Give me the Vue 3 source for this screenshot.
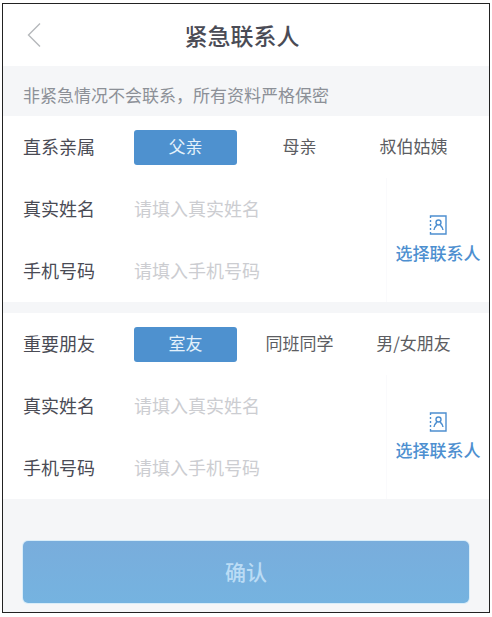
<script setup>
import { reactive } from 'vue';

const groups = reactive([
  {
    id: 'family',
    title: '直系亲属',
    options: ['父亲', '母亲', '叔伯姑姨'],
    selected: '父亲',
    name: '',
    phone: '',
  },
  {
    id: 'friend',
    title: '重要朋友',
    options: ['室友', '同班同学', '男/女朋友'],
    selected: '室友',
    name: '',
    phone: '',
  },
]);
</script>

<template>
  <main class="page">
    <header class="header">
      <button type="button" class="back_btn" aria-label="返回">
        <svg width="14" height="26" viewBox="0 0 14 26">
          <path d="M13 1.5 L1.5 13 L13 24.5" />
        </svg>
      </button>
      <h1>紧急联系人</h1>
    </header>
    <p class="notice">非紧急情况不会联系，所有资料严格保密</p>

    <form v-on:submit.prevent>
      <section v-for="group in groups" v-bind:key="group.id" class="group">
        <div class="row relation">
          <span class="label">{{ group.title }}</span>
          <div class="options">
            <button
              v-for="option in group.options"
              v-bind:key="option"
              type="button"
              v-bind:class="{ active: group.selected === option }"
              v-bind:aria-pressed="group.selected === option"
              v-on:click="group.selected = option"
            >
              {{ option }}
            </button>
          </div>
        </div>
        <div class="details">
          <div class="fields">
            <div class="row">
              <label class="label" v-bind:for="`${group.id}-name`">真实姓名</label>
              <input
                type="text"
                v-bind:id="`${group.id}-name`"
                placeholder="请填入真实姓名"
                v-model="group.name"
              />
            </div>
            <div class="row">
              <label class="label" v-bind:for="`${group.id}-phone`">手机号码</label>
              <input
                type="tel"
                v-bind:id="`${group.id}-phone`"
                placeholder="请填入手机号码"
                v-model="group.phone"
              />
            </div>
          </div>
          <button type="button" class="contact_btn">
            <svg width="18" height="20" viewBox="0 0 18 20">
              <path d="M1.5 3 V1 H17 V19 H1.5 V17" />
              <path d="M1.5 5 V7 M1.5 9 V11 M1.5 13 V15" />
              <circle cx="9.5" cy="7.5" r="2.5" />
              <path d="M5 15 C5 12.5 6.5 11.5 8 10 M11 10 C12.5 11.5 14 12.5 14 15" />
            </svg>
            <span>选择联系人</span>
          </button>
        </div>
      </section>

      <div class="footer">
        <button type="submit" class="submit_btn">确认</button>
      </div>
    </form>
  </main>
</template>

<style>
body {
  background: #fff;
}
</style>

<style scoped>
.page {
  margin: 3px 2px 4px;
  border: 1px solid #222;
  background: #f5f6f8;
  font-family: 'Noto Sans CJK SC', sans-serif;
  color: #4a4b55;
}
.page button,
.page input {
  padding: 0;
  border: none;
  background: none;
  font-family: inherit;
}
svg {
  fill: none;
  stroke: currentColor;
}

.header {
  display: grid;
  grid-template-columns: 60px 1fr 68px;
  align-items: center;
  height: 62px;
  background: #fff;
}
.header h1 {
  grid-column: 2;
  margin: 0;
  font-size: 23px;
  font-weight: 500;
  line-height: 32px;
  text-align: center;
}
.header .back_btn {
  display: flex;
  align-items: center;
  height: 62px;
  padding-left: 24px;
  color: #b5b8bb;
}
.back_btn svg {
  stroke-width: 1.4;
}

.notice {
  margin: 0;
  padding: 17px 20px 9px;
  font-size: 17px;
  line-height: 24px;
  color: #8c9097;
}

.group {
  margin-bottom: 11px;
  background: #fff;
}
.row {
  display: flex;
  align-items: center;
  height: 62px;
  padding-left: 20px;
}
.label {
  flex: none;
  width: 111px;
  padding-bottom: 2px;
  font-size: 18px;
  line-height: 24px;
}
.relation {
  padding-right: 24px;
}
.options {
  display: grid;
  flex: 1;
  grid-template-columns: repeat(3, 1fr);
  gap: 11px;
}
.options button {
  height: 35px;
  padding-bottom: 2px;
  border-radius: 3px;
  font-size: 17px;
  line-height: 24px;
  color: #5c5d62;
  white-space: nowrap;
}
.options button.active {
  background: #4e91cf;
  color: #e4f1fb;
}

.details {
  display: flex;
}
.fields {
  flex: 1;
  min-width: 0;
}
.fields input {
  flex: 1;
  min-width: 0;
  height: 40px;
  padding-bottom: 2px;
  font-size: 18px;
  color: #4a4b55;
  outline: none;
}
.fields input::placeholder {
  color: #cccdd1;
}
.details .contact_btn {
  display: flex;
  flex-direction: column;
  align-items: center;
  justify-content: center;
  gap: 6px;
  width: 103px;
  border-left: 1px solid #fafafc;
  font-size: 17px;
  font-weight: 500;
  line-height: 24px;
  color: #4d8fd0;
}
.contact_btn svg {
  stroke-width: 1.4;
}

.footer {
  padding: 31px 20px 9px;
}
.footer .submit_btn {
  width: 100%;
  height: 62px;
  padding-bottom: 2px;
  border-radius: 5px;
  background: linear-gradient(#79addc, #75b3e0);
  box-shadow: 0 0 0 1px #d9edf9;
  font-size: 21px;
  font-weight: 500;
  color: #bbdcf5;
}
</style>
